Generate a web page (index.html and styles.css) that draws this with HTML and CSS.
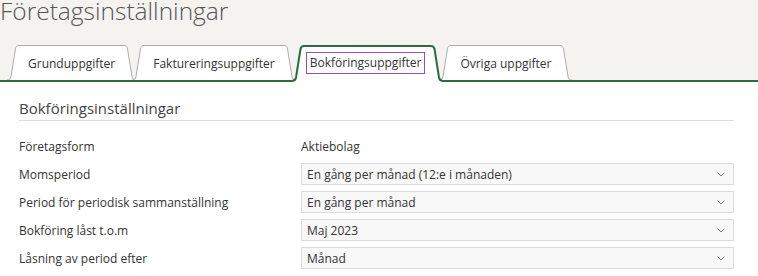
FILE: index.html
```html
<!DOCTYPE html>
<html lang="sv">
<head>
    <meta charset="UTF-8">
    <meta name="viewport" content="width=device-width, initial-scale=1.0">
    <title>Företagsinställningar</title>
    <link rel="stylesheet" href="styles.css">
</head>
<body>
    <div class="header">
        <h1 class="page-title">Företagsinställningar</h1>
        <div class="tabs">
            <a class="tab">
                <svg class="cap" width="12" height="35" viewBox="0 0 12 35"><path class="cap-fill" d="M0,35 C2.5,35 3.5,34 4,31.5 L8.5,4 C9,1.5 10,0.5 12,0.5 L12,35 Z"/><path class="cap-line" d="M0,35 C2.5,35 3.5,34 4,31.5 L8.5,4 C9,1.5 10,0.5 12,0.5"/></svg>
                <span class="tab-label">Grunduppgifter</span>
                <svg class="cap" width="12" height="35" viewBox="0 0 12 35"><path class="cap-fill" d="M0,0.5 C2,0.5 3,1.5 3.5,4 L8,31.5 C8.5,34 9.5,35 12,35 L0,35 Z"/><path class="cap-line" d="M0,0.5 C2,0.5 3,1.5 3.5,4 L8,31.5 C8.5,34 9.5,35 12,35"/></svg>
            </a>
            <a class="tab">
                <svg class="cap" width="12" height="35" viewBox="0 0 12 35"><path class="cap-fill" d="M0,35 C2.5,35 3.5,34 4,31.5 L8.5,4 C9,1.5 10,0.5 12,0.5 L12,35 Z"/><path class="cap-line" d="M0,35 C2.5,35 3.5,34 4,31.5 L8.5,4 C9,1.5 10,0.5 12,0.5"/></svg>
                <span class="tab-label">Faktureringsuppgifter</span>
                <svg class="cap" width="12" height="35" viewBox="0 0 12 35"><path class="cap-fill" d="M0,0.5 C2,0.5 3,1.5 3.5,4 L8,31.5 C8.5,34 9.5,35 12,35 L0,35 Z"/><path class="cap-line" d="M0,0.5 C2,0.5 3,1.5 3.5,4 L8,31.5 C8.5,34 9.5,35 12,35"/></svg>
            </a>
            <a class="tab active">
                <svg class="cap" width="12" height="37" viewBox="0 0 12 37"><path class="cap-fill" d="M0,36 C2.5,36 3.5,35 4,32.5 L8.5,4 C9,1.5 10,1 12,1 L12,37 L0,37 Z"/><path class="cap-line" d="M0,36 C2.5,36 3.5,35 4,32.5 L8.5,4 C9,1.5 10,1 12,1"/></svg>
                <span class="tab-label"><span class="focus">Bokföringsuppgifter</span></span>
                <svg class="cap" width="12" height="37" viewBox="0 0 12 37"><path class="cap-fill" d="M0,1 C2,1 3,1.5 3.5,4 L8,32.5 C8.5,35 9.5,36 12,36 L12,37 L0,37 Z"/><path class="cap-line" d="M0,1 C2,1 3,1.5 3.5,4 L8,32.5 C8.5,35 9.5,36 12,36"/></svg>
            </a>
            <a class="tab">
                <svg class="cap" width="12" height="35" viewBox="0 0 12 35"><path class="cap-fill" d="M0,35 C2.5,35 3.5,34 4,31.5 L8.5,4 C9,1.5 10,0.5 12,0.5 L12,35 Z"/><path class="cap-line" d="M0,35 C2.5,35 3.5,34 4,31.5 L8.5,4 C9,1.5 10,0.5 12,0.5"/></svg>
                <span class="tab-label">Övriga uppgifter</span>
                <svg class="cap" width="12" height="35" viewBox="0 0 12 35"><path class="cap-fill" d="M0,0.5 C2,0.5 3,1.5 3.5,4 L8,31.5 C8.5,34 9.5,35 12,35 L0,35 Z"/><path class="cap-line" d="M0,0.5 C2,0.5 3,1.5 3.5,4 L8,31.5 C8.5,34 9.5,35 12,35"/></svg>
            </a>
        </div>
    </div>

    <div class="content">
        <h2 class="section-title">Bokföringsinställningar</h2>
        <div class="form-grid">
            <div class="label">Företagsform</div>
            <div class="value">Aktiebolag</div>

            <div class="label">Momsperiod</div>
            <div class="select"><span>En gång per månad (12:e i månaden)</span><svg class="chevron" width="8" height="5" viewBox="0 0 8 5"><polyline points="0.5,0.5 4,4 7.5,0.5"/></svg></div>

            <div class="label">Period för periodisk sammanställning</div>
            <div class="select"><span>En gång per månad</span><svg class="chevron" width="8" height="5" viewBox="0 0 8 5"><polyline points="0.5,0.5 4,4 7.5,0.5"/></svg></div>

            <div class="label">Bokföring låst t.o.m</div>
            <div class="select"><span>Maj 2023</span><svg class="chevron" width="8" height="5" viewBox="0 0 8 5"><polyline points="0.5,0.5 4,4 7.5,0.5"/></svg></div>

            <div class="label">Låsning av period efter</div>
            <div class="select"><span>Månad</span><svg class="chevron" width="8" height="5" viewBox="0 0 8 5"><polyline points="0.5,0.5 4,4 7.5,0.5"/></svg></div>
        </div>
    </div>
</body>
</html>
```

FILE: styles.css
```css
body {
    margin: 0;
    font-family: "Open Sans", "DejaVu Sans", sans-serif;
    font-size: 12px;
    color: #333;
    background-color: #fff;
}
.header {
    background-color: #f4f3f0;
    border-bottom: 2px solid #2e6b41;
    height: 80px;
    display: flex;
    flex-direction: column;
}
.page-title {
    margin: 0;
    font-size: 24.5px;
    font-weight: 300;
    line-height: 22px;
    color: #555;
}
.tabs {
    margin-top: auto;
    margin-bottom: -2px;
    padding-left: 7px;
    display: flex;
    align-items: flex-end;
}
.tab {
    display: flex;
    margin-bottom: 2px;
    cursor: pointer;
    color: #333;
}
.tab + .tab {
    margin-left: -4px;
}
.cap {
    display: block;
}
.cap-fill {
    fill: #fff;
}
.cap-line {
    fill: none;
    stroke: #adadad;
    stroke-width: 1;
}
.tab-label {
    display: flex;
    align-items: center;
    height: 35px;
    box-sizing: border-box;
    padding: 0 9px;
    background-color: #fff;
    border-top: 1px solid #adadad;
    white-space: nowrap;
}
.tab.active {
    margin-bottom: 0;
    position: relative;
    z-index: 1;
}
.tab.active .cap-line {
    stroke: #2e6b41;
    stroke-width: 2;
}
.tab.active .tab-label {
    height: 37px;
    border-top: 2px solid #2e6b41;
    padding: 0 7px 3px 3px;
}
.focus {
    line-height: 18px;
    padding: 1px 3px;
    outline: 1px solid #8a52d1;
}
.content {
    padding: 16px 24px 0 19px;
}
.section-title {
    margin: 0;
    font-size: 15px;
    font-weight: 400;
    line-height: 20px;
    color: #444;
    padding-bottom: 2px;
    border-bottom: 1px solid #ddd;
}
.form-grid {
    margin-top: 14px;
    display: grid;
    grid-template-columns: 282px 1fr;
    grid-auto-rows: 22px;
    row-gap: 6px;
    align-items: center;
}
.select {
    height: 22px;
    box-sizing: border-box;
    border: 1px solid #dcdcdc;
    background-color: #f8f8f8;
    display: flex;
    align-items: center;
    justify-content: space-between;
    padding: 0 8px 0 5px;
}
.chevron polyline {
    fill: none;
    stroke: #8a8a8a;
    stroke-width: 1;
}
```
